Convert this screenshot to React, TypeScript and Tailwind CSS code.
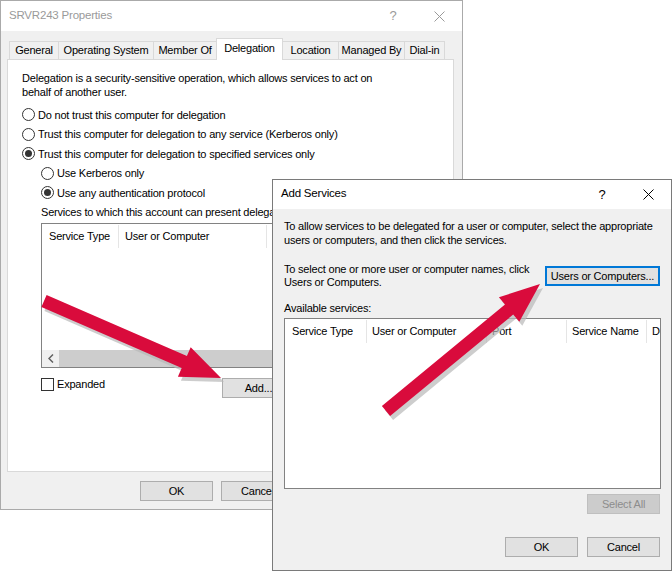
import React from 'react';

// Windows 10 style dialogs: "SRVR243 Properties" with "Add Services" on top, plus callout arrows

function CloseGlyph({ color }: { color: string }) {
  return (
    <svg width="11" height="11" viewBox="0 0 11 11">
      <path d="M0.5 0.5 L10.5 10.5 M10.5 0.5 L0.5 10.5" stroke={color} strokeWidth="1" fill="none" />
    </svg>
  );
}

function TitleBar({ title, inactive, h }: { title: string; inactive?: boolean; h: string }) {
  const color = inactive ? 'text-[#9a9a9a]' : 'text-black';
  return (
    <div className={`flex items-center bg-white shrink-0 ${h}`}>
      <span className={`pl-[8px] pb-[1px] text-[11.5px] ${color}`}>{title}</span>
      <div className="ml-auto flex h-full">
        <div className={`w-[46px] flex items-center justify-center text-[13px] ${color}`}>?</div>
        <div className="w-[46px] flex items-center justify-center">
          <CloseGlyph color={inactive ? '#9a9a9a' : '#000'} />
        </div>
      </div>
    </div>
  );
}

function Radio({ checked, label }: { checked?: boolean; label: string }) {
  return (
    <div className="flex items-center gap-[3px] h-[19.5px]">
      <span className="w-[13px] h-[13px] rounded-full border border-[#333] bg-white flex items-center justify-center shrink-0">
        {checked && <span className="w-[7px] h-[7px] rounded-full bg-[#333]" />}
      </span>
      <span className="whitespace-nowrap">{label}</span>
    </div>
  );
}

const btn =
  'flex items-center justify-center h-[20px] w-[73px] border border-[#adadad] bg-[#e1e1e1] text-black shrink-0';

const tabs = [
  { name: 'General', w: 'w-[50px]' },
  { name: 'Operating System', w: 'w-[96px]' },
  { name: 'Member Of', w: 'w-[64px]' },
  { name: 'Delegation', w: 'w-[67px]', active: true },
  { name: 'Location', w: 'w-[57px]' },
  { name: 'Managed By', w: 'w-[67px]' },
  { name: 'Dial-in', w: 'w-[41px]' },
];

function PropertiesDialog() {
  return (
    <div className="absolute left-0 top-0 w-[463px] h-[510px] border border-[#aaaaaa] bg-[#f0f0f0] flex flex-col">
      <TitleBar title="SRVR243 Properties" inactive h="h-[30px]" />

      {/* Tabs */}
      <div className="flex items-end h-[28px] pl-[8px] shrink-0">
        {tabs.map((t, i) => (
          <div
            key={t.name}
            className={`${t.w} ${i > 0 ? '-ml-px' : ''} flex items-center justify-center border border-b-0 border-[#d9d9d9] whitespace-nowrap ${
              t.active ? 'h-[22px] bg-white relative z-10 -mb-px pb-[2px]' : 'h-[18px] bg-[#f0f0f0]'
            }`}
          >
            {t.name}
          </div>
        ))}
      </div>

      {/* Tab panel */}
      <div className="ml-[6px] w-[447px] h-[413px] border border-[#d9d9d9] bg-white pl-[14px] pt-[11px] shrink-0 flex flex-col">
        <p className="leading-[14px] whitespace-nowrap">
          Delegation is a security-sensitive operation, which allows services to act on
          <br />
          behalf of another user.
        </p>
        <div className="mt-[6px] flex flex-col">
          <Radio label="Do not trust this computer for delegation" />
          <Radio label="Trust this computer for delegation to any service (Kerberos only)" />
          <Radio checked label="Trust this computer for delegation to specified services only" />
          <div className="ml-[19px] flex flex-col">
            <Radio label="Use Kerberos only" />
            <Radio checked label="Use any authentication protocol" />
            <div className="h-[19.5px] flex items-center whitespace-nowrap">
              Services to which this account can present delegated credentials:
            </div>
          </div>
        </div>

        {/* Services list */}
        <div className="ml-[19px] mt-[1px] w-[397px] h-[145px] border border-[#828282] bg-white flex flex-col">
          <div className="flex h-[25px] shrink-0">
            <div className="w-[77px] pl-[7px] flex items-center border-r border-[#e5e5e5] my-[1px]">Service Type</div>
            <div className="w-[148px] pl-[6px] flex items-center border-r border-[#e5e5e5] my-[1px]">User or Computer</div>
            <div className="flex-1" />
          </div>
          <div className="flex-1" />
          <div className="flex h-[17px] bg-[#f0f0f0] shrink-0">
            <div className="w-[17px] flex items-center justify-center">
              <svg width="6" height="9" viewBox="0 0 6 9">
                <path d="M5 0.5 L1 4.5 L5 8.5" stroke="#606060" strokeWidth="1.5" fill="none" />
              </svg>
            </div>
            <div className="w-[240px] bg-[#cdcdcd]" />
          </div>
        </div>

        <div className="mt-[10px] flex items-start">
          <div className="w-[200px] pl-[19px] h-[13px] flex items-center gap-[3px]">
            <span className="w-[13px] h-[13px] border border-[#333] bg-white shrink-0" />
            <span>Expanded</span>
          </div>
          <div className={btn}>Add...</div>
          <div className={`${btn} ml-[8px]`}>Remove</div>
        </div>
      </div>

      <div className="mt-[9px] flex justify-end gap-[8px] pr-[6px]">
        <div className={btn}>OK</div>
        <div className={btn}>Cancel</div>
        <div className={btn}>Apply</div>
        <div className={btn}>Help</div>
      </div>
    </div>
  );
}

function AddServicesDialog() {
  return (
    <div className="absolute left-[272px] top-[179px] w-[400px] h-[392px] border border-[#7a7a7a] bg-[#f0f0f0] flex flex-col">
      <TitleBar title="Add Services" h="h-[29px]" />
      <div className="px-[11px] pt-[11px] flex flex-col">
        <p className="leading-[13.5px] whitespace-nowrap">
          To allow services to be delegated for a user or computer, select the appropriate
          <br />
          users or computers, and then click the services.
        </p>
        <div className="mt-[16px] flex items-center justify-between">
          <p className="leading-[13px] whitespace-nowrap">
            To select one or more user or computer names, click
            <br />
            Users or Computers.
          </p>
          <div className="w-[115px] h-[20px] border-2 border-[#0078d7] bg-[#e1e1e1] flex items-center justify-center">
            Users or Computers...
          </div>
        </div>
        <div className="mt-[12px] h-[14px] flex items-center">Available services:</div>
        <div className="mt-[3px] w-[377px] h-[171px] border border-[#828282] bg-white overflow-hidden">
          <div className="flex h-[25px]">
            <div className="w-[82px] shrink-0 pl-[7px] flex items-center border-r border-[#e5e5e5] my-[1px]">Service Type</div>
            <div className="w-[120px] shrink-0 pl-[5px] flex items-center border-r border-[#e5e5e5] my-[1px]">User or Computer</div>
            <div className="w-[80px] shrink-0 pl-[5px] flex items-center border-r border-[#e5e5e5] my-[1px]">Port</div>
            <div className="w-[80px] shrink-0 pl-[5px] flex items-center border-r border-[#e5e5e5] my-[1px]">Service Name</div>
            <div className="w-[80px] shrink-0 pl-[5px] flex items-center whitespace-nowrap">Domain</div>
          </div>
        </div>
        <div className="mt-[5px] self-end w-[73px] h-[20px] border border-[#bfbfbf] bg-[#cccccc] text-[#8d8d8d] flex items-center justify-center">
          Select All
        </div>
        <div className="mt-[23px] flex justify-end gap-[9px]">
          <div className={btn}>OK</div>
          <div className={btn}>Cancel</div>
        </div>
      </div>
    </div>
  );
}

function Arrows() {
  const a1 = '46.6,295 186.9,356 190.7,347.3 221,378 177.9,376.7 181.7,368 41.4,307';
  const a2 = '381.9,406 505,304.5 498.9,297.2 540,284 519.3,321.8 513.2,314.5 390.1,416';
  return (
    <svg className="absolute left-0 top-0 pointer-events-none" width="672" height="571" viewBox="0 0 672 571">
      <g transform="translate(3 4)" fill="#b8b8b8" opacity="0.7">
        <polygon points={a1} />
        <polygon points={a2} />
      </g>
      <g fill="#d90b3c">
        <polygon points={a1} />
        <polygon points={a2} />
      </g>
    </svg>
  );
}

export default function App() {
  return (
    <div className="relative w-[672px] h-[571px] overflow-hidden bg-white text-[11px] tracking-[-0.2px] text-black font-['Liberation_Sans',Arial,sans-serif]">
      <PropertiesDialog />
      <AddServicesDialog />
      <Arrows />
    </div>
  );
}
